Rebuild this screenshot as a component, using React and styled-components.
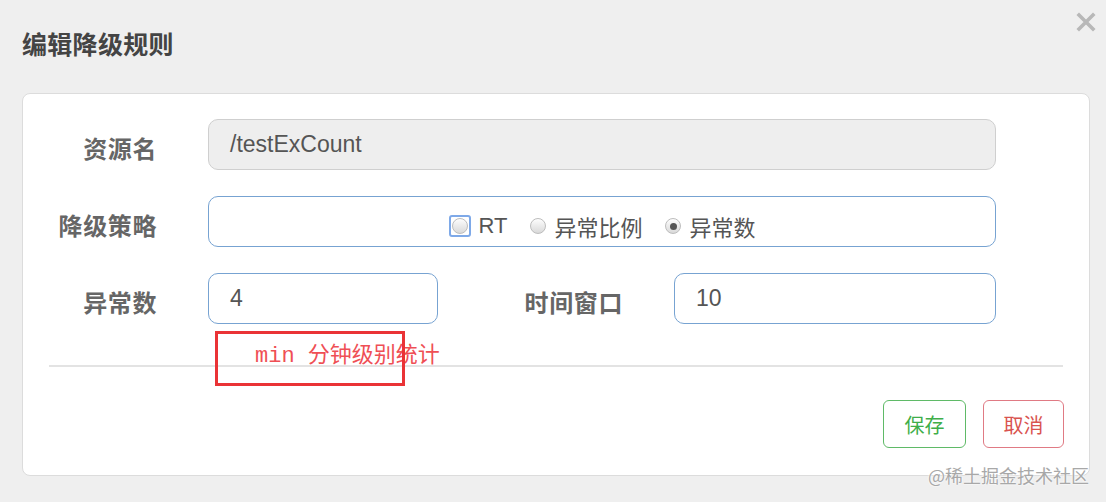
import React from 'react';
import styled, { createGlobalStyle } from 'styled-components';

const GlobalStyle = createGlobalStyle`
  html, body {
    margin: 0;
    padding: 0;
    background: #efefef;
  }
  body {
    font-family: 'Liberation Sans', 'Noto Sans CJK SC', sans-serif;
  }
`;

const Page = styled.div`
  position: relative;
  width: 1106px;
  height: 502px;
  background: #efefef;
  overflow: hidden;
`;

const Header = styled.div`
  display: flex;
  align-items: center;
  justify-content: space-between;
  height: 93px;
  padding: 0 10px 8px 22px;
  box-sizing: border-box;
`;

const Title = styled.h3`
  margin: 0;
  font-family: 'Noto Sans CJK SC', sans-serif;
  font-size: 25px;
  font-weight: 700;
  color: #444;
  letter-spacing: 0.3px;
`;

const CloseButton = styled.button`
  align-self: flex-start;
  margin-top: 12px;
  width: 20px;
  height: 20px;
  padding: 0;
  border: none;
  background: none;
  cursor: pointer;
`;

const Card = styled.div`
  margin: 0 16px 0 22px;
  height: 383px;
  box-sizing: border-box;
  background: #fff;
  border: 1px solid #dcdcdc;
  border-radius: 8px;
  padding-top: 25px;
`;

const Form = styled.div`
  display: flex;
  flex-direction: column;
  gap: 26px;
`;

const Row = styled.div`
  position: relative;
  display: flex;
  align-items: center;
  height: 51px;
`;

const Label = styled.label`
  width: ${(p) => p.$width || 134}px;
  margin-right: 51px;
  padding-top: 6px;
  text-align: right;
  font-family: 'Noto Sans CJK SC', sans-serif;
  font-size: 24px;
  font-weight: 700;
  color: #666;
  letter-spacing: 0.6px;
`;

const Field = styled.div`
  display: flex;
  align-items: center;
  justify-content: ${(p) => (p.$center ? 'center' : 'flex-start')};
  width: ${(p) => p.$width}px;
  height: 51px;
  box-sizing: border-box;
  padding: 0 21px;
  border: 1px solid ${(p) => (p.$disabled ? '#cfcfcf' : '#77a3d2')};
  border-radius: 10px;
  background: ${(p) => (p.$disabled ? '#eeeeee' : '#fff')};
  font-size: 23px;
  color: #555;
`;

const RadioGroup = styled.div`
  display: flex;
  align-items: center;
  gap: 23px;
  padding-top: 9px;
`;

const RadioItem = styled.span`
  display: inline-flex;
  align-items: center;
  gap: 8px;
  font-family: 'Liberation Sans', 'Noto Sans CJK SC', sans-serif;
  font-size: 22px;
  color: #555;
`;

const Focus = styled.span`
  display: inline-flex;
  align-items: center;
  justify-content: center;
  width: 22px;
  height: 22px;
  box-sizing: border-box;
  border: 2px solid #7ea9e8;
  border-radius: 3px;
`;

const Radio = styled.span`
  position: relative;
  display: inline-block;
  width: 16px;
  height: 16px;
  box-sizing: border-box;
  border: 1px solid #bdbdbd;
  border-radius: 50%;
  background: linear-gradient(#fdfdfd, #d9d9d9);

  &::after {
    content: '';
    display: ${(p) => (p.$checked ? 'block' : 'none')};
    position: absolute;
    left: 3.5px;
    top: 3.5px;
    width: 7px;
    height: 7px;
    border-radius: 50%;
    background: #555;
  }
`;

const Help = styled.div`
  position: absolute;
  left: 232px;
  top: 100%;
  margin-top: 20px;
  white-space: nowrap;
  font-family: 'Liberation Mono', 'Noto Sans CJK SC', monospace;
  font-size: 22px;
  line-height: 26px;
  color: #ef4f55;
`;

const Marker = styled.div`
  position: absolute;
  left: 192px;
  top: 100%;
  margin-top: 7px;
  width: 190px;
  height: 55px;
  box-sizing: border-box;
  border: 3px solid #ea3336;
`;

const Divider = styled.hr`
  margin: 41px 26px 0 26px;
  border: none;
  border-top: 2px solid #e3e3e3;
`;

const Actions = styled.div`
  display: flex;
  justify-content: flex-end;
  gap: 17px;
  padding: 33px 25px 0 0;
`;

const Button = styled.button`
  width: ${(p) => p.$width}px;
  height: 48px;
  border: 1px solid ${(p) => (p.$tone === 'danger' ? '#e07a84' : '#5fba67')};
  border-radius: 6px;
  background: #fff;
  color: ${(p) => (p.$tone === 'danger' ? '#d9534f' : '#3fae49')};
  font-family: 'Noto Sans CJK SC', sans-serif;
  font-size: 20px;
  cursor: pointer;
`;

const Watermark = styled.div`
  position: absolute;
  right: 17px;
  bottom: 14px;
  font-family: 'Noto Sans CJK SC', sans-serif;
  font-size: 18px;
  color: #a8a8a8;
  text-shadow: 0 0 2px #fff, 0 0 2px #fff;
`;

function CloseIcon() {
  return (
    <svg width="20" height="20" viewBox="0 0 20 20">
      <path d="M3 3 L17 17 M17 3 L3 17" stroke="#b8b8b8" strokeWidth="3.6" strokeLinecap="square" />
    </svg>
  );
}

export default function App() {
  return (
    <Page>
      <GlobalStyle />
      <Header>
        <Title>编辑降级规则</Title>
        <CloseButton aria-label="close">
          <CloseIcon />
        </CloseButton>
      </Header>

      <Card>
        <Form>
          <Row>
            <Label>资源名</Label>
            <Field $width={788} $disabled>/testExCount</Field>
          </Row>

          <Row>
            <Label>降级策略</Label>
            <Field $width={788} $center>
              <RadioGroup>
                <RadioItem>
                  <Focus><Radio /></Focus>
                  RT
                </RadioItem>
                <RadioItem>
                  <Radio />
                  异常比例
                </RadioItem>
                <RadioItem>
                  <Radio $checked />
                  异常数
                </RadioItem>
              </RadioGroup>
            </Field>
          </Row>

          <Row>
            <Label>异常数</Label>
            <Field $width={230}>4</Field>
            <Label $width={185}>时间窗口</Label>
            <Field $width={322}>10</Field>
            <Help>min 分钟级别统计</Help>
            <Marker />
          </Row>
        </Form>

        <Divider />

        <Actions>
          <Button $width={83}>保存</Button>
          <Button $width={81} $tone="danger">取消</Button>
        </Actions>
      </Card>

      <Watermark>@稀土掘金技术社区</Watermark>
    </Page>
  );
}
